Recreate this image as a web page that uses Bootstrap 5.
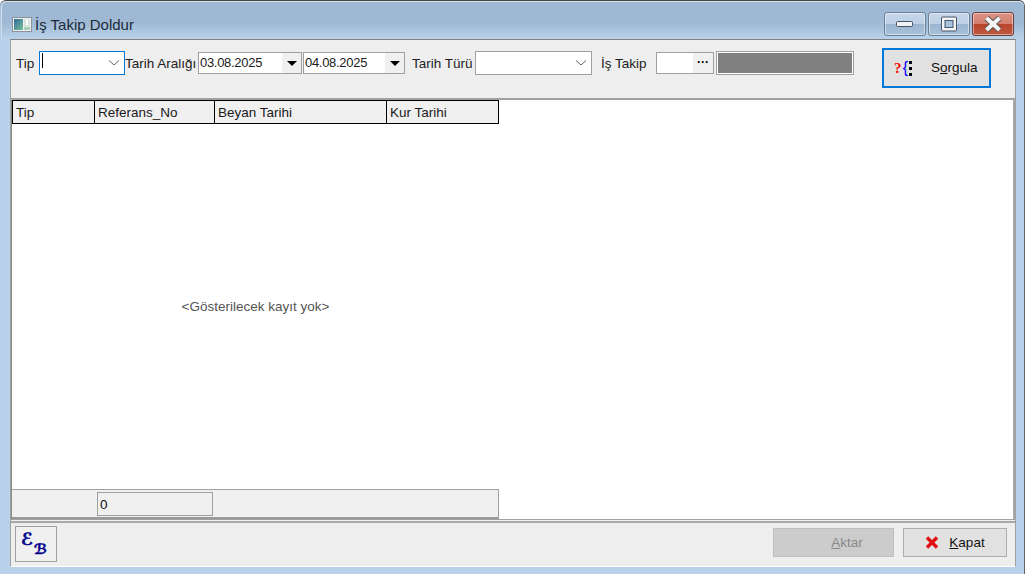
<!DOCTYPE html>
<html lang="tr">
<head>
<meta charset="utf-8">
<title>İş Takip Doldur</title>
<link href="https://cdn.jsdelivr.net/npm/bootstrap@5.3.0/dist/css/bootstrap.min.css" rel="stylesheet">
<style>
html,body{margin:0;padding:0;width:1025px;height:574px;overflow:hidden;background:#fff}
body{font-family:"Liberation Sans",Arial,sans-serif;font-size:13.5px;color:#1a1a1a;line-height:1}
.win{width:1025px;height:574px;background:linear-gradient(#a3bcd6 0,#b9d1ea 40px,#b9d1ea 100%);border-top:1px solid #444;border-right:1px solid #666;border-top-right-radius:6px;border-top-left-radius:6px;padding-left:1px}
.titlebar{height:38px;background:linear-gradient(#9db8d3 0%,#9fb9d4 55%,#b9d2ea 100%);padding:7px 10px 0 10px;border-left:1px solid #cfdfee;border-top:1px solid #dbe6f0;border-top-left-radius:6px;border-top-right-radius:6px}
.ttl{font-size:15px;color:#1c2a38;margin-left:3px}
.wbtn{width:42px;height:24px;border:1px solid #6b7f95;border-radius:3px;margin-left:2px;background:linear-gradient(#c6d7ea 0%,#bdd0e6 48%,#9bb5d0 52%,#a9c2db 100%);box-shadow:inset 0 0 0 1px rgba(255,255,255,.45)}
.wbtn.wclose{background:linear-gradient(#dc9385 0%,#d3806f 48%,#b9442a 52%,#bf5a42 100%);border-color:#6d3f3f}
.wrow{margin-top:-1px}
.client{margin-left:9px;width:1006px;height:528px;background:#f0f0f0;border-top:1px solid #7f7f7f;border-left:1px solid #a0a0a0;border-right:1px solid #a0a0a0;border-bottom:1px solid #fff}
.toolbar{height:58px;background:#eee;padding:11px 0 0 5px}
.lab{white-space:nowrap;padding-top:6px;color:#222;flex-shrink:0}
.combo{height:24px;background:#fff;border:1px solid #a0a0a0;position:relative;flex-shrink:0}
.combo.active{border-color:#0078d7}
.chev{position:absolute;right:4px;top:7px}
.caretbar{position:absolute;left:2px;top:1px;width:1px;height:15px;background:#000}
.datebox{height:22px;background:#fff;border:1px solid #a0a0a0;display:flex;justify-content:space-between;align-items:stretch;margin-top:1px;flex-shrink:0}
.dtxt{padding:3px 0 0 1px;font-size:13px;letter-spacing:-.3px}
.dbtn{width:19px;background:#f0f0f0;display:flex;align-items:center;justify-content:center}
.tri{width:0;height:0;border-left:5px solid transparent;border-right:5px solid transparent;border-top:5px solid #000}
.ellip{width:20px;background:#f0f0f0;font-weight:bold;text-align:center;font-size:12px;line-height:18px;color:#000}
.graybox{width:138px;height:24px;background:#808080;border:1px solid #a0a0a0;box-shadow:inset 0 0 0 1px #fff;flex-shrink:0}
.sorgu{width:109px;height:40px;margin:-3px 0 0 28px;background:#e1e1e1;border:2px solid #0078d7;display:flex;align-items:center;padding:0 0 0 10px;color:#111;flex-shrink:0}
.qicon{width:37px;display:flex;align-items:center}
.qm{font-family:"Liberation Serif",serif;font-weight:bold;font-size:15px;color:#f00;width:8px}
.qb{font-size:16px;color:#00f;width:7px;text-align:center}
.qd{width:3px;height:15px;border-left:3px dotted #000}
.gridouter{height:422px;background:#fff;border-top:2px solid #a0a0a0;border-right:2px solid #a8a8a8;border-bottom:1px solid #a0a0a0}
.gridwrap{height:419px;background:#fff;border-left:1px solid #888;display:flex;flex-direction:column;width:488px}
.ghead{height:24px;display:flex;border:1px solid #000;width:487px;background:#f0f0f0;flex-shrink:0}
.gc{border-right:1px solid #000;padding:5px 0 0 3px;height:22px;white-space:nowrap}
.gc:last-child{border-right:0}
.gbody{flex:1;display:flex;align-items:center;justify-content:center;color:#555}
.gfoot{height:30px;background:#f0f0f0;border-top:1px solid #a0a0a0;border-right:1px solid #a0a0a0;padding:2px 0 0 85px;border-bottom:2px solid #9a9a9a;flex-shrink:0}
.fbox{width:116px;height:24px;border:1px solid #a0a0a0;padding:5px 0 0 2px;color:#111}
.bottombar{height:45px;background:#eee;border-top:2px solid #a8a8a8;margin-top:1px;padding:3px 8px 0 4px}
.ebtn{width:42px;height:36px;background:#f0f0f0;border:1px solid #a0a0a0;color:#00008b;font-family:"DejaVu Sans",sans-serif;font-style:italic;font-weight:bold;position:relative;-webkit-text-stroke:.5px #00008b}
.ltr1{position:absolute;left:5px;top:4px;font-size:17px}
.ltr2{position:absolute;left:18px;top:15px;font-size:14px}
.kbtn{height:29px;margin-top:2px;background:#e1e1e1;border:1px solid #adadad;display:flex;align-items:center;justify-content:center;color:#111}
.kbtn.aktar{width:121px;background:#ccc;border-color:#bfbfbf;color:#8a8a8a;margin-right:9px;padding-left:27px}
.kbtn.kapat{width:104px}
.kicon{margin-right:10px}
</style>
</head>
<body>
<div class="win">
  <div class="titlebar d-flex align-items-center">
    <svg width="20" height="15" viewBox="0 0 20 15" class="flex-shrink-0"><defs><linearGradient id="ig" x1="0" y1="0" x2="1" y2="1"><stop offset="0" stop-color="#2f6a9a"/><stop offset="1" stop-color="#7ac29a"/></linearGradient></defs><rect x=".5" y=".5" width="19" height="14" fill="#eef1f3" stroke="#8a8f98"/><rect x="2" y="2" width="9" height="11" fill="url(#ig)"/><rect x="12" y="2" width="6" height="11" fill="#d7e6dc"/><rect x="14" y="3" width="2" height="5" fill="#fff"/><rect x="12" y="10" width="6" height="3" fill="#a9cfb6"/></svg>
    <span class="ttl">İş Takip Doldur</span>
    <div class="ms-auto d-flex wrow">
      <div class="wbtn d-flex align-items-center justify-content-center"><svg width="18" height="8" viewBox="0 0 18 8"><rect x=".5" y="1.5" width="16" height="5" rx="1" fill="#f3f3f3" stroke="#44546a"/></svg></div>
      <div class="wbtn d-flex align-items-center justify-content-center"><svg width="18" height="16" viewBox="0 0 18 16"><rect x="1.5" y="1" width="15" height="14" rx="1" fill="#f3f3f3" stroke="#44546a"/><rect x="5" y="4.5" width="8" height="7" fill="#a9c2db" stroke="#44546a"/></svg></div>
      <div class="wbtn wclose d-flex align-items-center justify-content-center"><svg width="20" height="16" viewBox="0 0 20 16"><path d="M3.5 2 L16.5 14 M16.5 2 L3.5 14" stroke="#555" stroke-width="6"/><path d="M3.5 2 L16.5 14 M16.5 2 L3.5 14" stroke="#f4f4f4" stroke-width="4"/></svg></div>
    </div>
  </div>
  <div class="client">
    <div class="toolbar d-flex align-items-start">
      <span class="lab" style="width:23px">Tip</span>
      <div class="combo active" style="width:86px"><span class="caretbar"></span><svg class="chev" width="12" height="8" viewBox="0 0 12 8"><path d="M1 1.5 L6 6 L11 1.5" fill="none" stroke="#666"/></svg></div>
      <span class="lab" style="width:73px">Tarih Aralığı</span>
      <div class="datebox" style="width:104px"><span class="dtxt">03.08.2025</span><span class="dbtn"><span class="tri"></span></span></div>
      <div class="datebox" style="width:102px;margin-left:1px"><span class="dtxt">04.08.2025</span><span class="dbtn"><span class="tri"></span></span></div>
      <span class="lab" style="margin-left:7px;width:63px">Tarih Türü</span>
      <div class="combo" style="width:117px"><svg class="chev" width="12" height="8" viewBox="0 0 12 8"><path d="M1 1.5 L6 6 L11 1.5" fill="none" stroke="#666"/></svg></div>
      <span class="lab" style="margin-left:9px;width:55px">İş Takip</span>
      <div class="datebox" style="width:58px"><span></span><span class="ellip">···</span></div>
      <div class="graybox" style="margin-left:2px"></div>
      <div class="sorgu"><span class="qicon"><span class="qm">?</span><span class="qb">{</span><span class="qd"></span></span><span>S<u>o</u>rgula</span></div>
    </div>
    <div class="gridouter">
      <div class="gridwrap">
        <div class="ghead">
          <div class="gc" style="width:82px">Tip</div>
          <div class="gc" style="width:120px">Referans_No</div>
          <div class="gc" style="width:172px">Beyan Tarihi</div>
          <div class="gc" style="width:111px">Kur Tarihi</div>
        </div>
        <div class="gbody">&lt;Gösterilecek kayıt yok&gt;</div>
        <div class="gfoot"><div class="fbox">0</div></div>
      </div>
    </div>
    <div class="bottombar d-flex align-items-start">
      <div class="ebtn"><span class="ltr1">ℰ</span><span class="ltr2">ℬ</span></div>
      <div class="kbtn aktar ms-auto"><span><u>A</u>ktar</span></div>
      <div class="kbtn kapat"><svg class="kicon" width="14" height="13" viewBox="0 0 14 13"><path d="M2 1.5 L12 11.5 M12 1.5 L2 11.5" stroke="#e01010" stroke-width="3.4"/></svg><span><u>K</u>apat</span></div>
    </div>
  </div>
</div>
<script src="https://cdn.jsdelivr.net/npm/bootstrap@5.3.0/dist/js/bootstrap.bundle.min.js"></script>
</body>
</html>
